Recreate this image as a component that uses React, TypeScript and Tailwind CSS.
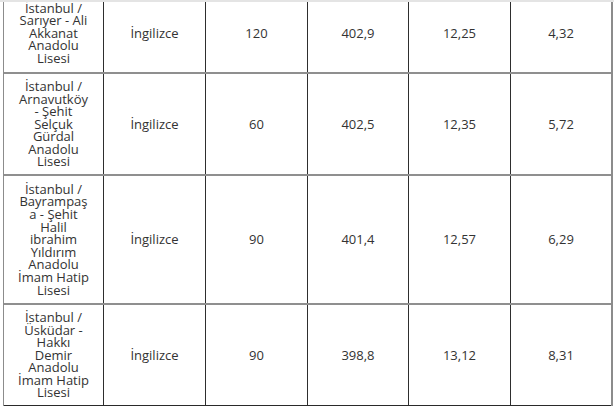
import React from "react";

type Row = { h: string; name: string[]; lang: string; quota: string; score: string; a: string; b: string; last?: boolean };

const rows: Row[] = [
  { h: "h-[80px]", name: ["İstanbul /", "Sarıyer - Ali", "Akkanat", "Anadolu", "Lisesi"], lang: "İngilizce", quota: "120", score: "402,9", a: "12,25", b: "4,32" },
  { h: "h-[102px]", name: ["İstanbul /", "Arnavutköy", "- Şehit", "Selçuk", "Gürdal", "Anadolu", "Lisesi"], lang: "İngilizce", quota: "60", score: "402,5", a: "12,35", b: "5,72" },
  { h: "h-[129px]", name: ["İstanbul /", "Bayrampaş", "a - Şehit", "Halil", "ibrahim", "Yıldırım", "Anadolu", "İmam Hatip", "Lisesi"], lang: "İngilizce", quota: "90", score: "401,4", a: "12,57", b: "6,29" },
  { h: "h-[101px]", name: ["İstanbul /", "Üsküdar -", "Hakkı", "Demir", "Anadolu", "İmam Hatip", "Lisesi"], lang: "İngilizce", quota: "90", score: "398,8", a: "13,12", b: "8,31", last: true },
];

function Cell({ w, children, border = true }: { w: string; children: React.ReactNode; border?: boolean }) {
  return (
    <div className={`${w} shrink-0 flex items-center justify-center text-center ${border ? "border-r border-[#2e2e2e]" : ""}`}>
      {children}
    </div>
  );
}

export default function App() {
  return (
    <div className="relative w-[614px] h-[407px] overflow-hidden bg-white text-[#333333] text-[13px] leading-[12.6px]" style={{ fontFamily: '"Open Sans", "Noto Sans", sans-serif' }}>
      <div className="mt-[-6px] ml-[3px] w-[610px] border-l border-r-2 border-l-[#8c8c8c] border-r-[#8c8c8c]">
        {rows.map((r, i) => (
          <div key={i} className={`flex ${r.h} ${r.last ? "border-b border-[#2a2a2a]" : "border-b-2 border-[#8f8f8f]"}`}>
            <Cell w="w-[100px]">
              <div className="flex flex-col">
                {r.name.map((l, j) => (
                  <span key={j} className="block whitespace-nowrap">{l}</span>
                ))}
              </div>
            </Cell>
            <Cell w="w-[102px]">{r.lang}</Cell>
            <Cell w="w-[102px]">{r.quota}</Cell>
            <Cell w="w-[101px]">{r.score}</Cell>
            <Cell w="w-[102px]">{r.a}</Cell>
            <Cell w="w-[100px]" border={false}>{r.b}</Cell>
          </div>
        ))}
      </div>
      <div className="absolute top-0 left-0 w-full h-[2px] bg-[#e4e4e4]" />
    </div>
  );
}
